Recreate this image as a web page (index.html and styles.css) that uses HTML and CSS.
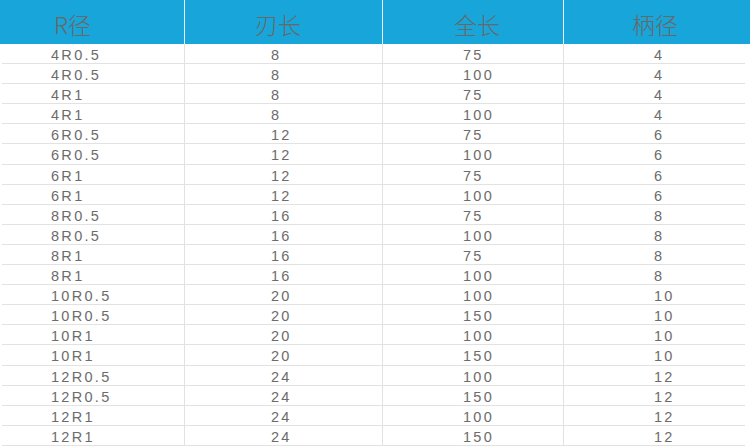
FILE: index.html
```html
<!DOCTYPE html>
<html lang="zh">
<head>
<meta charset="utf-8">
<link rel="stylesheet" href="styles.css">
</head>
<body>
<div class="table">
  <div class="head">
    <div class="hc c1">R径</div>
    <div class="hc c2">刃长</div>
    <div class="hc c3">全长</div>
    <div class="hc c4">柄径</div>
  </div>
  <div class="body">
    <div class="row"><div class="c c1">4R0.5</div><div class="c c2">8</div><div class="c c3">75</div><div class="c c4">4</div></div>
    <div class="row"><div class="c c1">4R0.5</div><div class="c c2">8</div><div class="c c3">100</div><div class="c c4">4</div></div>
    <div class="row"><div class="c c1">4R1</div><div class="c c2">8</div><div class="c c3">75</div><div class="c c4">4</div></div>
    <div class="row"><div class="c c1">4R1</div><div class="c c2">8</div><div class="c c3">100</div><div class="c c4">4</div></div>
    <div class="row"><div class="c c1">6R0.5</div><div class="c c2">12</div><div class="c c3">75</div><div class="c c4">6</div></div>
    <div class="row"><div class="c c1">6R0.5</div><div class="c c2">12</div><div class="c c3">100</div><div class="c c4">6</div></div>
    <div class="row"><div class="c c1">6R1</div><div class="c c2">12</div><div class="c c3">75</div><div class="c c4">6</div></div>
    <div class="row"><div class="c c1">6R1</div><div class="c c2">12</div><div class="c c3">100</div><div class="c c4">6</div></div>
    <div class="row"><div class="c c1">8R0.5</div><div class="c c2">16</div><div class="c c3">75</div><div class="c c4">8</div></div>
    <div class="row"><div class="c c1">8R0.5</div><div class="c c2">16</div><div class="c c3">100</div><div class="c c4">8</div></div>
    <div class="row"><div class="c c1">8R1</div><div class="c c2">16</div><div class="c c3">75</div><div class="c c4">8</div></div>
    <div class="row"><div class="c c1">8R1</div><div class="c c2">16</div><div class="c c3">100</div><div class="c c4">8</div></div>
    <div class="row"><div class="c c1">10R0.5</div><div class="c c2">20</div><div class="c c3">100</div><div class="c c4">10</div></div>
    <div class="row"><div class="c c1">10R0.5</div><div class="c c2">20</div><div class="c c3">150</div><div class="c c4">10</div></div>
    <div class="row"><div class="c c1">10R1</div><div class="c c2">20</div><div class="c c3">100</div><div class="c c4">10</div></div>
    <div class="row"><div class="c c1">10R1</div><div class="c c2">20</div><div class="c c3">150</div><div class="c c4">10</div></div>
    <div class="row"><div class="c c1">12R0.5</div><div class="c c2">24</div><div class="c c3">100</div><div class="c c4">12</div></div>
    <div class="row"><div class="c c1">12R0.5</div><div class="c c2">24</div><div class="c c3">150</div><div class="c c4">12</div></div>
    <div class="row"><div class="c c1">12R1</div><div class="c c2">24</div><div class="c c3">100</div><div class="c c4">12</div></div>
    <div class="row"><div class="c c1">12R1</div><div class="c c2">24</div><div class="c c3">150</div><div class="c c4">12</div></div>
  </div>
</div>
</body>
</html>
```

FILE: styles.css
```css
html, body {
  margin: 0;
  padding: 0;
  background: #ffffff;
}
.table {
  width: 750px;
  height: 446px;
  overflow: hidden;
}
.head {
  display: grid;
  grid-template-columns: 185px 198px 181px 186px;
  height: 44px;
  background: #18a5d9;
}
.hc {
  font-family: "Noto Sans CJK SC", "Liberation Sans", sans-serif;
  font-weight: 300;
  font-size: 23px;
  line-height: 44px;
  padding-top: 2px;
  color: #686868;
  border-right: 1px solid #e8f4fa;
  box-sizing: border-box;
}
.hc.c4 { border-right: none; }
.head .c1 { padding-left: 54px; }
.head .c2 { padding-left: 70px; }
.head .c3 { padding-left: 71px; }
.head .c4 { padding-left: 68px; }
.row {
  display: grid;
  grid-template-columns: 183px 198px 181px 183px;
  margin: 0 5px 0 2px;
  height: 20.1px;
  box-sizing: border-box;
  border-bottom: 1px solid #e2e2e2;
}
.c {
  font-family: "Liberation Sans", Arial, sans-serif;
  font-size: 14.5px;
  letter-spacing: 2.3px;
  line-height: 20px;
  color: #6c6c6c;
  border-right: 1px solid #e2e2e2;
  box-sizing: border-box;
  margin-bottom: -1px;
  padding-top: 1px;
}
.c.c4 { border-right: none; }
.row .c1 { padding-left: 49px; }
.row .c2 { padding-left: 86px; }
.row .c3 { padding-left: 80px; }
.row .c4 { padding-left: 90px; }
```
